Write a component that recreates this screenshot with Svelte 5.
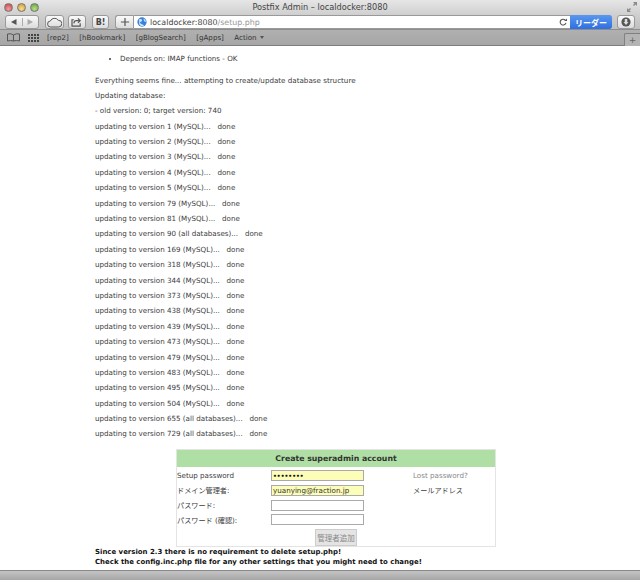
<script>
  const steps = [
    ['1 (MySQL)'],['2 (MySQL)'],['3 (MySQL)'],['4 (MySQL)'],['5 (MySQL)'],['79 (MySQL)'],['81 (MySQL)'],['90 (all databases)'],
    ['169 (MySQL)'],['318 (MySQL)'],['344 (MySQL)'],['373 (MySQL)'],['438 (MySQL)'],['439 (MySQL)'],['473 (MySQL)'],['479 (MySQL)'],['483 (MySQL)'],['495 (MySQL)'],['504 (MySQL)'],['655 (all databases)'],['729 (all databases)']
  ];
  const marks = ['[rep2]','[hBookmark]','[gBlogSearch]','[gApps]'];
</script>

<div class="win">
  <header class="chrome">
    <div class="title">
      <span class="dot red"></span><span class="dot yel"></span><span class="dot grn"></span>
      <span class="ttext">Postfix Admin – localdocker:8080</span>
      <svg class="fs" width="10" height="10" viewBox="0 0 10 10"><path d="M6 0h4v4L8.600 2.600 7 4 6 3l1.400-1.600zM0 6l1.400 1.400L3 6l1 1-1.600 1.400L4 10H0z" fill="#8b8b8b"/></svg>
    </div>
    <div class="tools">
      <div class="btn seg">
        <span class="half"><svg width="8" height="8" viewBox="0 0 8 8"><path d="M6.500 1v6L1 4z" fill="#555"/></svg></span>
        <span class="half last"><svg width="8" height="8" viewBox="0 0 8 8"><path d="M1.500 1v6L7 4z" fill="#aaa"/></svg></span>
      </div>
      <div class="btn w1"><svg width="15" height="11" viewBox="0 0 20 14"><path d="M5 13a4 4 0 0 1-.5-8 6 6 0 0 1 10.500-1 4.500 4.500 0 0 1 .5 9z" fill="none" stroke="#555" stroke-width="1.300"/></svg></div>
      <div class="btn w2"><svg width="12" height="10" viewBox="0 0 13 11"><path d="M9 4H5.500Q3.500 4 3 7M7.500 1.500 10 4 7.500 6.500M10 7v3H1V3h2" fill="none" stroke="#555" stroke-width="1.300"/></svg></div>
      <div class="btn w3 bold">B!</div>
      <div class="btn w4"><svg width="10" height="10" viewBox="0 0 11 11"><path d="M5.500 1v9M1 5.500h9" stroke="#555" stroke-width="1.300"/></svg></div>
      <div class="url">
        <svg class="globe" width="10" height="10" viewBox="0 0 14 14"><circle cx="7" cy="7" r="6.500" fill="#3a83d6"/><path d="M3 3q3-1 4 1T5 7t2 3 1 3q-4 0-5-3zM9 2q3 1 4 5l-3-1z" fill="#cfe3f7"/></svg>
        <span class="host">localdocker:8080</span><span class="path">/setup.php</span>
        <svg class="reload" width="8" height="8" viewBox="0 0 9 9"><path d="M7.500 3A3.300 3.300 0 1 0 7.800 5.500" fill="none" stroke="#555" stroke-width="1.200"/><path d="M6 3.500h3V.5z" fill="#555"/></svg>
        <span class="reader">リーダー</span>
      </div>
      <div class="btn dl"><svg width="10" height="10" viewBox="0 0 12 12"><circle cx="6" cy="6" r="5.500" fill="#555"/><path d="M4.500 2.500h3V6h1.500L6 9.500 3 6h1.500z" fill="#ddd"/></svg></div>
    </div>
    <div class="marks">
      <svg width="13" height="9" viewBox="0 0 13 9"><path d="M6.500 2Q4 0 .5 1v7q3-1 6 0 3-1 6 0V1Q9 0 6.500 2zm0 0v6" fill="none" stroke="#555"/></svg>
      <svg class="grid" width="11" height="8" viewBox="0 0 11 8"><path d="M0 0h2v2H0zM3 0h2v2H3zM6 0h2v2H6zM9 0h2v2H9zM0 3h2v2H0zM3 3h2v2H3zM6 3h2v2H6zM9 3h2v2H9zM0 6h2v2H0zM3 6h2v2H3zM6 6h2v2H6zM9 6h2v2H9z" fill="#444"/></svg>
      {#each marks as m}<span class="mk">{m}</span>{/each}
      <span class="mk act">Action <span class="tri"></span></span>
      <span class="newtab">+</span>
    </div>
  </header>

  <main class="page">
    <ul><li>Depends on: IMAP functions - OK</li></ul>
    <p class="first">Everything seems fine... attempting to create/update database structure</p>
    <p>Updating database:</p>
    <p>- old version: 0; target version: 740</p>
    {#each steps as s}
      <p>updating to version {s[0]}...&nbsp;&nbsp; done</p>
    {/each}

    <form class="card">
      <h2>Create superadmin account</h2>
      <div class="row r1">
        <span class="lab">Setup password</span>
        <span class="inp filled pw">••••••••</span>
        <span class="note gray">Lost password?</span>
      </div>
      <div class="row">
        <span class="lab">ドメイン管理者:</span>
        <span class="inp filled">yuanying@fraction.jp</span>
        <span class="note">メールアドレス</span>
      </div>
      <div class="row">
        <span class="lab">パスワード:</span>
        <span class="inp"></span>
      </div>
      <div class="row">
        <span class="lab">パスワード (確認):</span>
        <span class="inp"></span>
      </div>
      <div class="subrow"><span class="sub">管理者追加</span></div>
    </form>

    <div class="warn">Since version 2.3 there is no requirement to delete setup.php!<br>Check the config.inc.php file for any other settings that you might need to change!</div>
  </main>
  <footer class="status"></footer>
</div>

<style>
  :global(body) { margin: 0; background: #fff; }
  .win { width: 640px; height: 580px; display: flex; flex-direction: column; overflow: hidden; font-family: "DejaVu Sans", Verdana, sans-serif; font-size: 7.150px; color: #3c3c3c; }
  .chrome { flex: none; height: 46px; display: flex; flex-direction: column; }
  .title { height: 15px; flex: none; display: flex; align-items: center; position: relative; padding: 0 0 1px 4px; gap: 4px; box-sizing: border-box; background: linear-gradient(#e6e6e6, #cfcfcf); }
  .dot { width: 9px; height: 9px; border-radius: 50%; border: 0.5px solid #777; box-sizing: border-box; }
  .red { background: radial-gradient(circle at 50% 70%, #f0a0a0, #c8383a); }
  .yel { background: radial-gradient(circle at 50% 70%, #f7de90, #cf9428); }
  .grn { background: radial-gradient(circle at 50% 70%, #b8e088, #5f9c32); }
  .ttext { position: absolute; left: 0; right: 0; text-align: center; font-size: 8.200px; color: #444; }
  .fs { position: absolute; right: 3px; top: 2px; }
  .tools { height: 15px; flex: none; display: flex; align-items: flex-start; padding: 0 5px; background: linear-gradient(#cfcfcf, #c0c0c0); border-bottom: 1px solid #8d8d8d; box-sizing: border-box; }
  .btn { height: 14px; box-sizing: border-box; border: 1px solid #999; border-radius: 3px; background: linear-gradient(#fafafa, #dcdcdc); display: flex; align-items: center; justify-content: center; margin-right: 5px; flex: none; }
  .seg { width: 34px; margin-right: 6px; }
  .half { flex: 1; display: flex; justify-content: center; border-right: 1px solid #aaa; }
  .half.last { border: 0; }
  .w1 { width: 19px; margin-right: 4px; }
  .w2 { width: 18px; margin-right: 6px; }
  .w3 { width: 17px; margin-right: 6px; font: bold 8px "DejaVu Sans", sans-serif; color: #444; }
  .w4 { width: 18px; margin-right: 0; border-radius: 3px 0 0 3px; border-right: 0; }
  .url { width: 479px; flex: none; height: 14px; display: flex; align-items: center; background: #fff; border: 1px solid #999; border-radius: 0 3px 3px 0; box-sizing: border-box; font-size: 7.900px; color: #444; margin-right: 5px; }
  .globe { margin: 0 3px 0 3px; }
  .host { color: #444; }
  .path { color: #999; }
  .reload { margin-left: auto; margin-right: 3px; }
  .reader { width: 42px; height: 14px; margin: -1px -1px -1px 0; background: linear-gradient(#5a97ee, #2f6fe0); border-radius: 0 3px 3px 0; color: #fff; font: bold 8px "Noto Sans CJK JP", sans-serif; display: flex; align-items: center; justify-content: center; flex: none; }
  .dl { width: 18px; margin: 0; }
  .marks { height: 16px; flex: none; box-sizing: border-box; display: flex; align-items: center; padding-left: 7px; background: linear-gradient(#b0b0b0, #a6a6a6); border-bottom: 1px solid #7d7d7d; position: relative; }
  .grid { margin-left: 8px; margin-right: 8px; }
  .mk { font-size: 7.100px; color: #333; margin-right: 10.500px; white-space: nowrap; }
  .tri { display: inline-block; border: 2.500px solid transparent; border-top: 3px solid #555; border-bottom: 0; vertical-align: 1px; margin-left: 1px; }
  .newtab { position: absolute; right: 0; bottom: -1px; width: 16px; height: 13px; box-sizing: border-box; font-size: 9px; line-height: 12px; text-align: center; color: #666; background: #b4b4b4; border: 1px solid #808080; border-bottom: 0; border-right: 0; border-radius: 2px 0 0 0; }

  .page { flex: 1; min-height: 0; padding: 0 0 0 95px; overflow: hidden; background: #fff; }
  ul { margin: 6px 0 0; padding: 0 0 0 25px; height: 14px; line-height: 14px; }
  li { list-style: disc; }
  p { margin: 0; height: 15.400px; line-height: 15.400px; white-space: nowrap; }
  .first { margin-top: 6.500px; }
  .card { width: 320px; margin: 7.500px 0 0 81px; box-sizing: border-box; border: 1px solid #e4e4e4; height: 98px; display: flex; flex-direction: column; }
  h2 { margin: 0; height: 17px; line-height: 17px; background: #b0dfa5; font-size: 7.800px; font-weight: bold; text-align: center; color: #333; flex: none; }
  .row { display: flex; align-items: center; height: 14.700px; flex: none; }
  .r1 { margin-top: 1px; }
  .lab { width: 94px; white-space: nowrap; font-family: "DejaVu Sans", "Noto Sans CJK JP", sans-serif; }
  .inp { width: 93px; height: 11px; box-sizing: border-box; border: 1px solid #aaa; background: #fff; font-size: 7.150px; line-height: 9px; padding-left: 1px; color: #333; overflow: hidden; white-space: nowrap; }
  .filled { background: #fbfdb9; }
  .pw { font-size: 6px; font-weight: bold; color: #111; }
  .note { margin-left: 49px; white-space: nowrap; font-family: "DejaVu Sans", "Noto Sans CJK JP", sans-serif; }
  .gray { color: #888; }
  .subrow { padding-left: 138px; height: 18px; margin-top: 2px; }
  .sub { display: inline-flex; width: 42px; height: 17px; align-items: center; justify-content: center; background: #e4e4e4; border: 1px solid #ccc; box-sizing: border-box; font: 7.500px "Noto Sans CJK JP", sans-serif; color: #888; }
  .warn { font-weight: bold; color: #111; line-height: 9.500px; font-size: 6.960px; white-space: nowrap; margin-top: 1px; }
  .status { flex: none; height: 10px; background: linear-gradient(#c4c4c4, #a6a6a6); border-top: 1px solid #888; box-sizing: border-box; }
</style>
